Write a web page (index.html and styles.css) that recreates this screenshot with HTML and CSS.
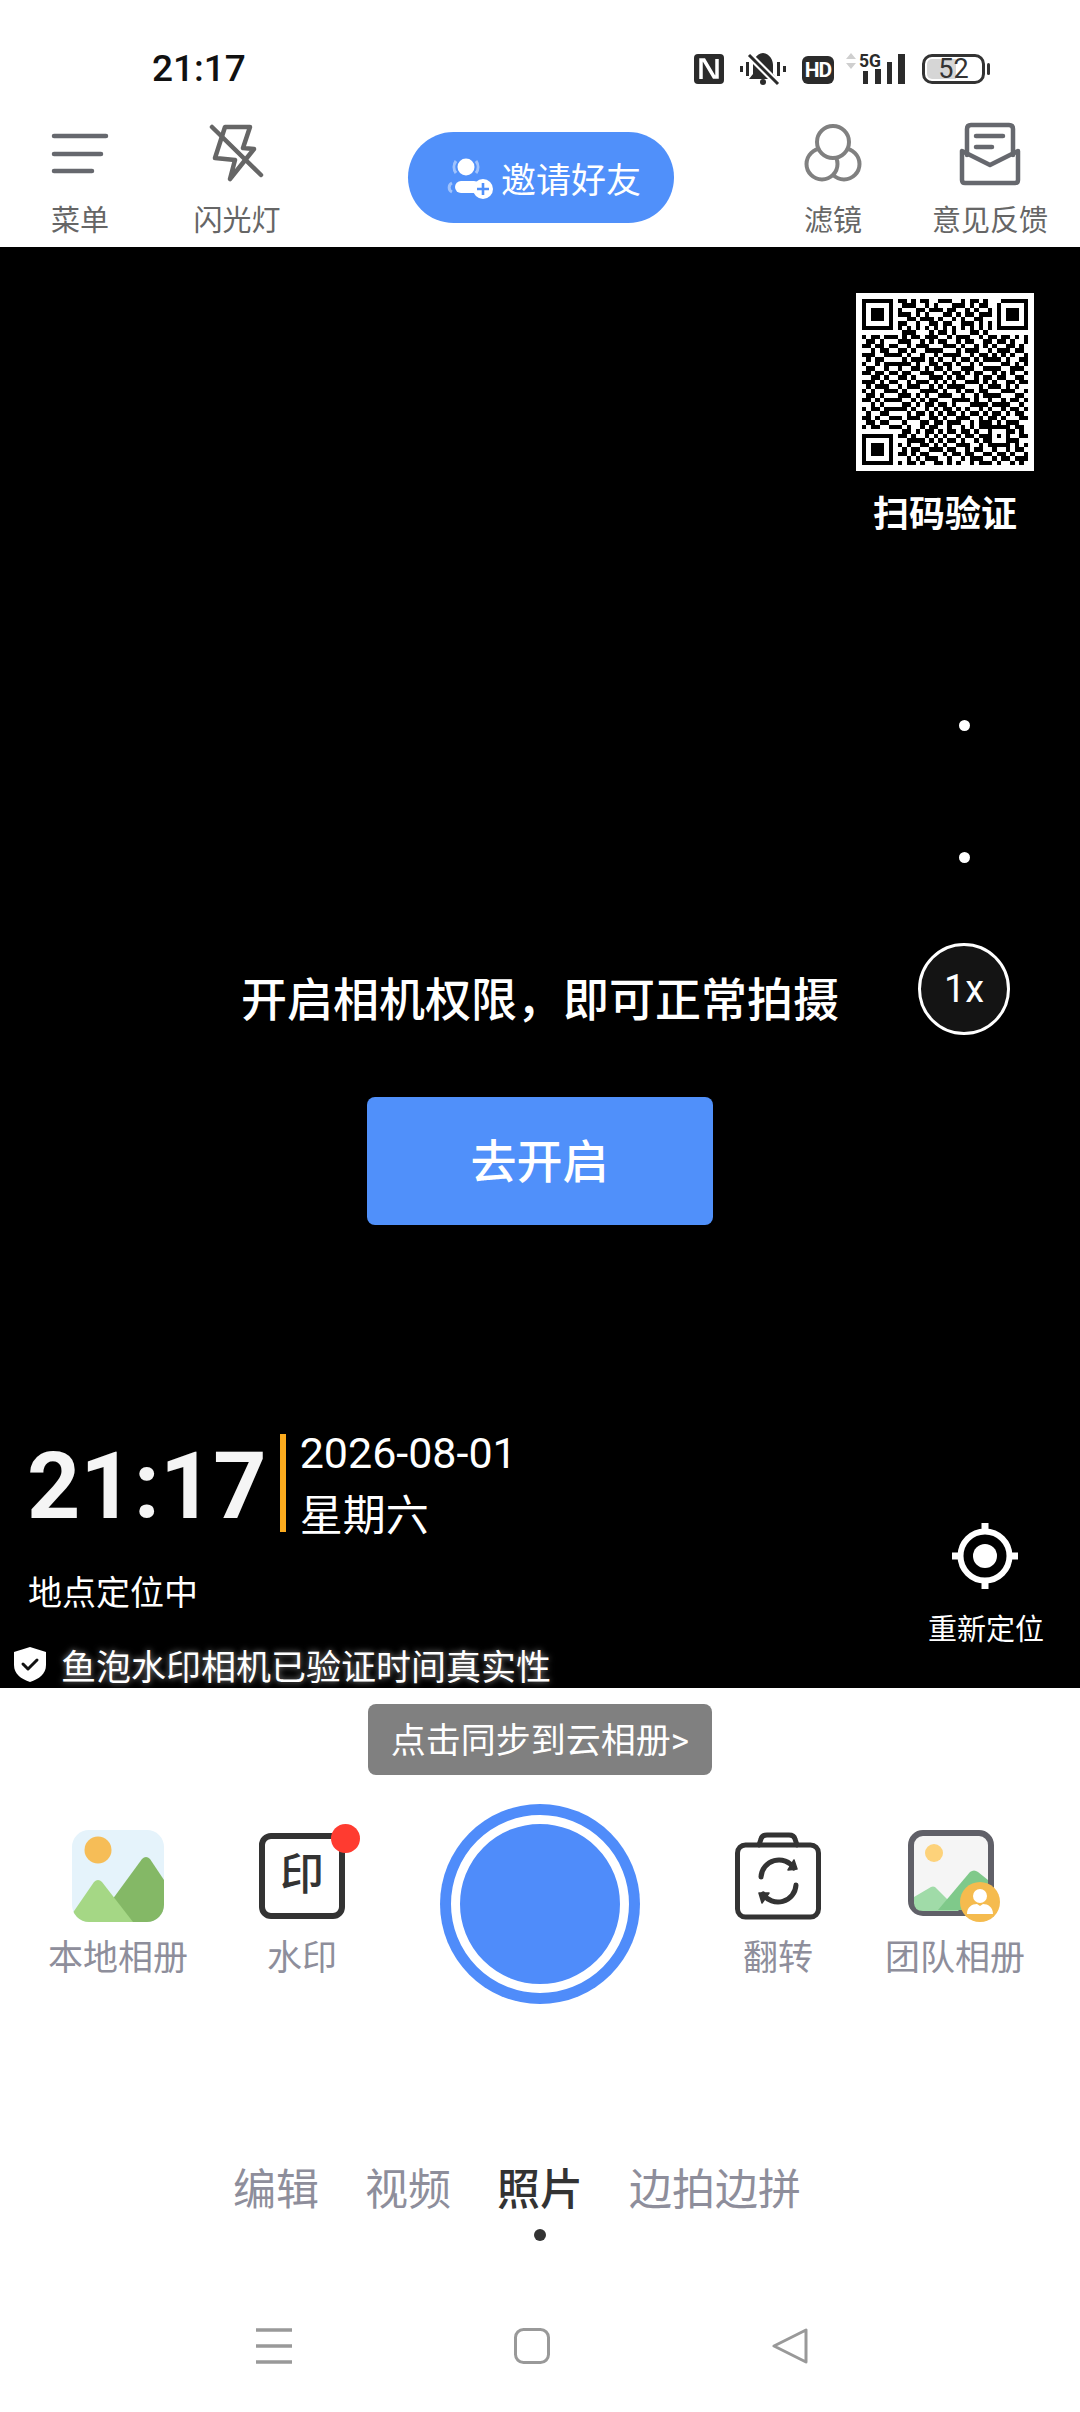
FILE: index.html
```html
<!DOCTYPE html>
<html lang="zh-CN">
<head>
    <meta charset="UTF-8">
    <meta name="viewport" content="width=device-width, initial-scale=1.0">
    <title>鱼泡水印相机</title>
    <link rel="stylesheet" href="styles.css">
</head>
<body>
    <div class="page">
        <div class="status-bar">
            <span class="status-time">21:17</span>
            <div class="status-icons">
                <svg class="icon-nfc" width="30" height="30" viewBox="0 0 30 30">
                    <rect width="30" height="30" rx="4" fill="#2b2b2b"/>
                    <path d="M7 25V6h3l10 17h3V5" fill="none" stroke="#fff" stroke-width="3.500"/>
                </svg>
                <svg class="icon-bell" width="48" height="34" viewBox="0 0 48 34">
                    <path d="M24 1C17 2 14 8 14 13v9l-4 5h28l-4-5v-9C34 8 31 2 24 1z" fill="#2b2b2b"/>
                    <circle cx="24" cy="30" r="3" fill="#2b2b2b"/>
                    <path d="M9 2l30 30" stroke="#fff" stroke-width="7"/>
                    <path d="M10 3l29 29" stroke="#2b2b2b" stroke-width="3"/>
                    <path d="M1 14h3v6H1zM7 10h3v14H7zM38 10h3v14h-3zM44 14h3v6h-3z" fill="#2b2b2b"/>
                </svg>
                <div class="status-hd">HD</div>
                <svg class="icon-net" width="60" height="40" viewBox="0 -6 60 40">
                    <path d="M1 7h10L6 1zM1 11h10l-5 6z" fill="#cfcfcf"/>
                    <text x="14" y="15" font-family="Roboto" font-weight="700" font-size="18" textLength="22" lengthAdjust="spacingAndGlyphs" fill="#2b2b2b">5G</text>
                    <path d="M18 19h5v13h-5zM30 17h6v15h-6zM42 10h5v22h-5zM53 2h7v30h-7z" fill="#2b2b2b"/>
                </svg>
                <div class="status-battery">52</div>
            </div>
        </div>

        <div class="toolbar">
            <div class="tool tool-menu">
                <svg width="64" height="64" viewBox="0 0 64 64" fill="none" stroke="#66686e" stroke-width="4.5" stroke-linecap="round">
                    <path d="M6 14h52M6 32h47M6 49h38"/>
                </svg>
                <span>菜单</span>
            </div>
            <div class="tool tool-flash">
                <svg width="64" height="64" viewBox="0 0 64 64" fill="none" stroke="#666" stroke-width="4.5" stroke-linejoin="round" stroke-linecap="round">
                    <path d="M20 5h25l-7 21 11 1-24 30 5-19-20-2z"/>
                    <path d="M7 5l49 48"/>
                </svg>
                <span>闪光灯</span>
            </div>
            <div class="invite">
                <svg width="46" height="44" viewBox="0 0 46 44">
                    <path d="M9 5a10 10 0 0 0 0 12M29 5a10 10 0 0 1 0 12" fill="none" stroke="#fff" stroke-opacity=".45" stroke-width="3"/>
                    <path d="M5 27a5 5 0 0 0 0 9" fill="none" stroke="#fff" stroke-opacity=".45" stroke-width="3"/>
                    <circle cx="19" cy="11" r="8.5" fill="#fff"/>
                    <rect x="8" y="25" width="25" height="12" rx="6" fill="#fff"/>
                    <circle cx="36" cy="33" r="10" fill="#fff"/>
                    <path d="M36 27v12M30 33h12" stroke="#5090fa" stroke-width="2.6"/>
                </svg>
                <span>邀请好友</span>
            </div>
            <div class="tool tool-filter">
                <svg width="64" height="64" viewBox="0 0 64 64" fill="#fff" stroke="#808080" stroke-width="4">
                    <circle cx="43" cy="42" r="15.500"/>
                    <circle cx="21" cy="42" r="15.500"/>
                    <circle cx="32" cy="20" r="16"/>
                </svg>
                <span>滤镜</span>
            </div>
            <div class="tool tool-feedback">
                <svg width="64" height="64" viewBox="0 0 64 64" fill="none" stroke="#66686e" stroke-width="4.5" stroke-linejoin="round" stroke-linecap="round">
                    <path d="M9 33V7q0-4 4-4h38q4 0 4 4v26"/>
                    <path d="M4 29v29q0 3 3 3h50q3 0 3-3V29L32 43z"/>
                    <path d="M18 14h27M18 25h16"/>
                </svg>
                <span>意见反馈</span>
            </div>
        </div>

        <div class="viewfinder">
            <p class="prompt">开启相机权限&#xFF0C;即可正常拍摄</p>
            <div class="open-btn">去开启</div>

            <div class="qr-block">
                <div class="qr-box"><svg id="qr" width="166" height="166" viewBox="0 0 37 37" shape-rendering="crispEdges"></svg></div>
                <span>扫码验证</span>
            </div>

            <div class="zoom-control">
                <i class="zoom-dot"></i>
                <i class="zoom-dot"></i>
                <div class="zoom-current">1x</div>
            </div>

            <div class="stamp-info">
                <div class="stamp-time">
                    <span class="clock">21:17</span>
                    <i class="stamp-bar"></i>
                    <div class="stamp-date">
                        <span>2026-08-01</span>
                        <span>星期六</span>
                    </div>
                </div>
                <div class="stamp-place">地点定位中</div>
                <div class="stamp-verified">
                    <svg width="32" height="35" viewBox="0 0 32 35">
                        <path d="M16 0l16 5v13c0 9-7 14-16 17C7 32 0 27 0 18V5z" fill="#fff"/>
                        <path d="M9 17l5 5 9-9" fill="none" stroke="#111" stroke-width="3" stroke-linecap="round" stroke-linejoin="round"/>
                    </svg>
                    <span>鱼泡水印相机已验证时间真实性</span>
                </div>
            </div>

            <div class="relocate">
                <svg width="70" height="70" viewBox="0 0 70 70" fill="none" stroke="#fff">
                    <circle cx="35" cy="35" r="24.5" stroke-width="6"/>
                    <circle cx="35" cy="35" r="12" fill="#fff" stroke="none"/>
                    <path d="M35 2v10M35 58v10M2 35h10M58 35h10" stroke-width="7"/>
                </svg>
                <span>重新定位</span>
            </div>
        </div>

        <div class="bottom">
            <div class="sync-toast">点击同步到云相册&gt;</div>

            <div class="controls">
                <div class="control">
                    <svg width="92" height="92" viewBox="0 0 92 92">
                        <defs><clipPath id="albumClip"><rect width="92" height="92" rx="17"/></clipPath></defs>
                        <g clip-path="url(#albumClip)">
                            <rect width="92" height="92" fill="#e5f3fb"/>
                            <circle cx="26" cy="20" r="13.5" fill="#f6bd57"/>
                            <path d="M40 70L70 29q4-4 8 0l14 21v42H60z" fill="#84b866"/>
                            <path d="M0 84l22-32q4-4 8 0l31 40H0z" fill="#a5d785"/>
                        </g>
                    </svg>
                    <span>本地相册</span>
                </div>
                <div class="control">
                    <div class="stamp-icon">印<i class="red-dot"></i></div>
                    <span>水印</span>
                </div>
                <div class="shutter"><i></i></div>
                <div class="control">
                    <svg width="86" height="92" viewBox="0 0 86 92" fill="none" stroke="#333" stroke-linecap="round" stroke-linejoin="round">
                        <path d="M24 15l2-6q1-4 6-4h22q5 0 6 4l2 6" stroke-width="5"/>
                        <rect x="2.500" y="15" width="81" height="72" rx="8" stroke-width="5"/>
                        <path d="M26 47a18 18 0 0 1 33-9M61 55a18 18 0 0 1-33 9" stroke-width="5"/>
                        <path d="M59 30l3 9-9 1zM27 73l-3-10 10 0z" fill="#333" stroke-width="1.500"/>
                    </svg>
                    <span>翻转</span>
                </div>
                <div class="control">
                    <svg width="94" height="92" viewBox="0 0 94 92">
                        <rect x="3" y="3" width="80" height="80" rx="12" fill="#f5f5f5" stroke="#606068" stroke-width="6"/>
                        <circle cx="26" cy="23" r="9" fill="#fdd27a"/>
                        <path d="M6 67l17-10q2-1 4 0l24 24H15q-9 0-9-9z" fill="#a0dba8"/>
                        <path d="M30 80l32-38q4-3 8 0l10 8v22q0 8-8 8z" fill="#7fc98a"/>
                        <circle cx="72" cy="72" r="20" fill="#f5bb4e"/>
                        <circle cx="72" cy="66" r="7" fill="#fff"/>
                        <path d="M59 84c0-7 5-10 10-10l3 2 3-2c5 0 10 3 10 10z" fill="#fff"/>
                    </svg>
                    <span>团队相册</span>
                </div>
            </div>

            <div class="tabs">
                <span>编辑</span>
                <span>视频</span>
                <span class="active">照片</span>
                <span>边拍边拼</span>
            </div>

            <div class="nav-bar">
                <svg width="36" height="36" viewBox="0 0 36 36" fill="none" stroke="#999" stroke-width="3.500">
                    <path d="M0 2h36M0 18h36M0 34h36"/>
                </svg>
                <svg width="36" height="36" viewBox="0 0 36 36" fill="none" stroke="#999" stroke-width="3">
                    <rect x="1.500" y="1.500" width="33" height="33" rx="8"/>
                </svg>
                <svg width="36" height="36" viewBox="0 0 36 36" fill="none" stroke="#999" stroke-width="3" stroke-linejoin="round">
                    <path d="M34 2v32L2 18z"/>
                </svg>
            </div>
        </div>
    </div>

    <script src="qr.js"></script>
</body>
</html>
```

FILE: styles.css
```css
* {
    box-sizing: border-box;
}

body {
    margin: 0;
    font-family: Roboto, "Noto Sans CJK SC", sans-serif;
    background-color: #fff;
}

.page {
    width: 1080px;
    height: 2412px;
    display: flex;
    flex-direction: column;
    overflow: hidden;
}

svg {
    display: block;
}

/* status bar */
.status-bar {
    height: 100px;
    padding: 54px 95px 0 152px;
    display: flex;
    justify-content: space-between;
    align-items: flex-start;
}

.status-time {
    font-size: 37px;
    font-weight: 500;
    line-height: 30px;
    color: #111;
}

.status-icons {
    display: flex;
    align-items: flex-start;
}

.icon-bell {
    margin: -2px 15px 0 15px;
}

.status-hd {
    width: 32px;
    height: 28px;
    margin: 2px 11px 0 0;
    border-radius: 6px;
    background-color: #2b2b2b;
    color: #fff;
    font-size: 21px;
    font-weight: 700;
    letter-spacing: -1px;
    line-height: 28px;
    text-align: center;
}

.icon-net {
    margin: -8px 17px 0 0;
}

.status-battery {
    position: relative;
    width: 63px;
    height: 30px;
    padding: 2px;
    border: 3px solid #333;
    border-radius: 10px;
    background: linear-gradient(90deg, #d6d6d6 55%, transparent 55%) content-box;
    color: #333;
    font-size: 27px;
    line-height: 20px;
    text-align: center;
}

.status-battery::after {
    content: "";
    position: absolute;
    right: -8px;
    top: 6px;
    width: 3px;
    height: 12px;
    border-radius: 2px;
    background-color: #333;
}

/* toolbar */
.toolbar {
    height: 147px;
    display: flex;
    align-items: flex-start;
    padding-top: 22px;
}

.tool {
    display: flex;
    flex-direction: column;
    align-items: center;
    color: #666;
    font-size: 29px;
    line-height: 36px;
}

.tool span {
    margin-top: 17px;
    white-space: nowrap;
}

.tool-menu,
.tool-filter {
    width: 160px;
}

.tool-flash,
.tool-feedback {
    width: 154px;
}

.tool-filter {
    margin-left: 79px;
}

.invite {
    width: 266px;
    height: 91px;
    margin: 10px 0 0 94px;
    padding-left: 39px;
    display: flex;
    align-items: center;
    gap: 8px;
    border-radius: 46px;
    background-color: #5090fa;
    color: #fff;
    font-size: 35px;
}

/* camera preview */
.viewfinder {
    position: relative;
    height: 1441px;
    padding-top: 721px;
    display: flex;
    flex-direction: column;
    align-items: center;
    background-color: #000;
    color: #fff;
}

.prompt {
    margin: 0;
    font-size: 46px;
    font-weight: 500;
    line-height: 64px;
}

.open-btn {
    width: 346px;
    height: 128px;
    margin: 65px 1px 0 0;
    border-radius: 8px;
    background-color: #5090fa;
    font-size: 46px;
    font-weight: 500;
    line-height: 130px;
    text-align: center;
}

.qr-block {
    position: absolute;
    top: 46px;
    right: 46px;
    width: 178px;
    display: flex;
    flex-direction: column;
    align-items: center;
    font-size: 36px;
    font-weight: 700;
}

.qr-box {
    width: 178px;
    height: 178px;
    padding: 6px;
    margin-bottom: 14px;
    background-color: #fff;
}

.zoom-control {
    position: absolute;
    top: 473px;
    right: 70px;
    width: 92px;
    display: flex;
    flex-direction: column;
    align-items: center;
}

.zoom-dot {
    width: 11px;
    height: 11px;
    margin-bottom: 121px;
    border-radius: 50%;
    background-color: #fff;
}

.zoom-dot + .zoom-dot {
    margin-bottom: 80px;
}

.zoom-current {
    width: 92px;
    height: 92px;
    border: 3px solid #fff;
    border-radius: 50%;
    background-color: #141414;
    font-size: 38px;
    line-height: 86px;
    text-align: center;
}

.stamp-info {
    position: absolute;
    left: 0;
    bottom: 0;
}

.stamp-time {
    height: 98px;
    padding-left: 27px;
    display: flex;
    align-items: flex-start;
}

.clock {
    height: 98px;
    font-size: 93px;
    font-weight: 700;
    line-height: 106px;
    color: #f5f5f5;
}

.stamp-bar {
    width: 6px;
    height: 98px;
    margin: 0 14px 0 13px;
    background-color: #fbab1e;
}

.stamp-date {
    display: flex;
    flex-direction: column;
    margin-top: -12px;
    font-size: 43px;
    line-height: 63px;
}

.stamp-place {
    margin-top: 39px;
    padding-left: 28px;
    font-size: 34px;
    line-height: 44px;
}

.stamp-verified {
    margin-top: 25px;
    padding-left: 14px;
    height: 48px;
    display: flex;
    align-items: center;
    gap: 15px;
    font-size: 35px;
    text-shadow: 0 0 6px rgba(255, 255, 255, 0.6);
}

.relocate {
    position: absolute;
    right: 29px;
    bottom: 38px;
    width: 130px;
    display: flex;
    flex-direction: column;
    align-items: center;
    font-size: 29px;
    line-height: 40px;
}

.relocate svg {
    margin-right: 2px;
}

.relocate span {
    margin-top: 19px;
    white-space: nowrap;
}

/* bottom panel */
.bottom {
    flex: 1;
    display: flex;
    flex-direction: column;
}

.sync-toast {
    width: 344px;
    height: 71px;
    margin: 16px auto 0 368px;
    border-radius: 8px;
    background-color: #808080;
    color: #fff;
    font-size: 35px;
    line-height: 75px;
    text-align: center;
}

.controls {
    display: grid;
    grid-template-columns: 236px 132px 344px 132px 222px;
    justify-items: center;
    align-items: start;
    margin-top: 29px;
}

.control {
    margin-top: 26px;
    display: flex;
    flex-direction: column;
    align-items: center;
    color: #8e8e9b;
    font-size: 35px;
    line-height: 50px;
}

.control span {
    margin-top: 12px;
    white-space: nowrap;
}

.stamp-icon {
    position: relative;
    width: 86px;
    height: 86px;
    margin: 3px 0;
    border: 6px solid #333;
    border-radius: 12px;
    color: #333;
    font-size: 44px;
    font-weight: 500;
    line-height: 72px;
    text-align: center;
}

.red-dot {
    position: absolute;
    top: -15px;
    right: -21px;
    width: 29px;
    height: 29px;
    border-radius: 50%;
    background-color: #ff3b30;
}

.shutter {
    width: 200px;
    height: 200px;
    padding: 11px;
    border-radius: 50%;
    background-color: #4f8cfa;
}

.shutter i {
    display: block;
    width: 178px;
    height: 178px;
    border: 9px solid #fff;
    border-radius: 50%;
}

.tabs {
    margin-top: 161px;
    padding-left: 233px;
    display: flex;
    gap: 46px;
    color: #8e8e9b;
    font-size: 43px;
    line-height: 50px;
}

.tabs .active {
    position: relative;
    color: #333;
    font-weight: 500;
}

.tabs .active::after {
    content: "";
    position: absolute;
    left: 37px;
    bottom: -26px;
    width: 12px;
    height: 12px;
    border-radius: 50%;
    background-color: #333;
}

.nav-bar {
    margin-top: 113px;
    padding-left: 256px;
    display: flex;
    gap: 222px;
}
```

FILE: qr.js
```js
// qr code modules, one string per row
const rows = [
    '1111111011010110011100101101000111111',
    '1000001001110010100011101011001000001',
    '1011101010001101110110010100101011101',
    '1011101011101010001101011011101011101',
    '1011101000110111010010100110001011101',
    '1000001011001001101100111010101000001',
    '1111111010101010101010101010101111111',
    '0000000001110001011010001101000000000',
    '1011011101011011100101110010110110101',
    '0110100011100101011001011001101101001',
    '1101101100101110001110100101010011010',
    '0010110011010011110001011100101110110',
    '1110011110100100101111001011010101001',
    '0101100001011101010010110101111010011',
    '1001011111101001101101001010000110101',
    '0110010010011010110100111001111001110',
    '1101101101100111001011010110010101001',
    '0011010011010001110101100101101100110',
    '1110101100101110101010011101010011011',
    '0101110010111001010111100010111010100',
    '1010011101000111101001011011000111001',
    '0110100011101010011100100101111000110',
    '1101011110010101100011110100100101101',
    '0010100001101011011010001111011110010',
    '1011011111010010101101010010100101101',
    '0100110000101101010110101101011010110',
    '1101001110111001101001110010110100011',
    '0110110001000110110111001011101011100',
    '1011001110100101100100101011111110110',
    '0000000001101011010110110100100011010',
    '1111111011010010101001011011101010011',
    '1000001000111101010110100101100011100',
    '1011101010100110101001110010111110101',
    '1011101001011001110110010110010010110',
    '1011101011010110001011011001101101001',
    '1000001000101011100100101110010110111',
    '1111111010110100110101001011101001010'
];

let d = '';
rows.forEach(function(row, y) {
    for (let x = 0; x < row.length; x++) {
        if (row[x] === '1') {
            d += 'M' + x + ' ' + y + 'h1v1h-1z';
        }
    }
});

const path = document.createElementNS('http://www.w3.org/2000/svg', 'path');
path.setAttribute('d', d);
document.getElementById('qr').appendChild(path);
```
